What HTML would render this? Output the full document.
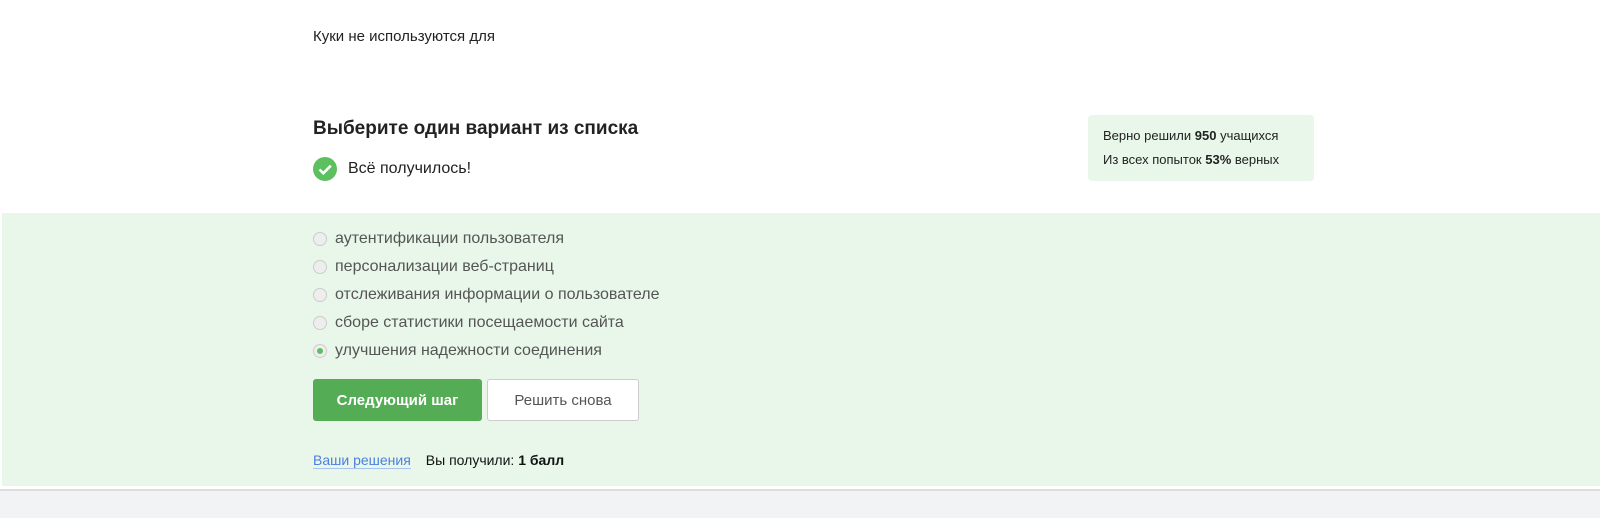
<!DOCTYPE html>
<html><head><meta charset="utf-8"><style>
body{margin:0;width:1600px;height:518px;background:#fff;font-family:"Liberation Sans",sans-serif;color:#222;position:relative;overflow:hidden}
.a{position:absolute}
.q{left:313px;top:28px;font-size:15px}
h2{position:absolute;left:313px;top:118px;margin:0;font-size:19px;font-weight:bold;color:#222}
.ok{left:313px;top:157px;font-size:16px;display:flex;align-items:center}
.stats{left:1088px;top:115px;width:226px;height:66px;background:#e8f7e9;border-radius:4px;font-size:13px;line-height:24px;box-sizing:border-box;padding:9px 0 0 15px;color:#222}
.green{left:2px;top:213px;right:0;height:273px;background:#e8f7e9}
.gray{left:0;top:489px;right:0;bottom:0;background:#f2f3f5;border-top:2px solid #ddd}
.opt{left:313px;font-size:16px;color:#555;display:flex;align-items:center}
.r{width:14px;height:14px;border-radius:50%;border:1px solid #ccc;background:#eee;margin-right:8px;box-sizing:border-box;position:relative}
.r.s::after{content:"";position:absolute;left:3px;top:3px;width:6px;height:6px;border-radius:50%;background:#5cc05f}
.b1{left:313px;top:379px;width:169px;height:42px;background:#54ad54;border-radius:3px;color:#fff;font-size:15px;font-weight:bold;display:flex;align-items:center;justify-content:center}
.b2{left:487px;top:379px;width:152px;height:42px;background:#fff;border:1px solid #ccc;border-radius:3px;box-sizing:border-box;color:#555;font-size:15px;display:flex;align-items:center;justify-content:center}
.ft{left:313px;top:452px;font-size:14px}
</style></head><body>
<div class="a q">Куки не используются для</div>
<h2>Выберите один вариант из списка</h2>
<div class="a ok"><svg width="24" height="24" viewBox="0 0 24 24" style="margin-right:11px"><circle cx="12" cy="12" r="12" fill="#5cc05f"/><path d="M6.5 12.5l3.8 3.8 7.5-7.6" stroke="#fff" stroke-width="2.6" fill="none"/></svg>Всё получилось!</div>
<div class="a stats">Верно решили <b>950</b> учащихся<br>Из всех попыток <b>53%</b> верных</div>
<div class="a green"></div>
<div class="a gray"></div>
<div class="a opt" style="top:230px"><span class="r"></span>аутентификации пользователя</div>
<div class="a opt" style="top:258px"><span class="r"></span>персонализации веб-страниц</div>
<div class="a opt" style="top:286px"><span class="r"></span>отслеживания информации о пользователе</div>
<div class="a opt" style="top:314px"><span class="r"></span>сборе статистики посещаемости сайта</div>
<div class="a opt" style="top:342px"><span class="r s"></span>улучшения надежности соединения</div>
<div class="a b1">Следующий шаг</div>
<div class="a b2">Решить снова</div>
<div class="a ft"><span style="color:#4a7fe0;border-bottom:1px solid #a9c2f0">Ваши решения</span><span style="margin-left:15px;color:#111">Вы получили: <b>1 балл</b></span></div>
</body></html>
